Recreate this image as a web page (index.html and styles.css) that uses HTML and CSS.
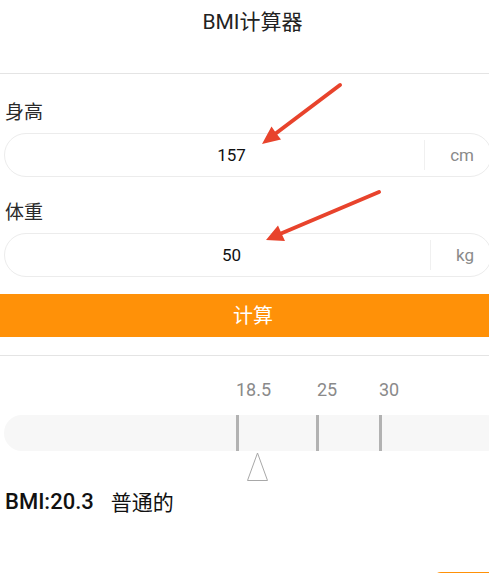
FILE: index.html
```html
<!DOCTYPE html>
<html lang="zh">
<head>
<meta charset="utf-8">
<title>BMI计算器</title>
<link rel="stylesheet" href="styles.css">
</head>
<body>
<div class="page">
  <header class="topbar"><h1 class="title">BMI计算器</h1></header>
  <main class="form">
    <div class="label">身高</div>
    <div class="field">
      <div class="field-value field-value--height">157</div>
      <div class="field-unit">cm</div>
    </div>
    <div class="label label--second">体重</div>
    <div class="field">
      <div class="field-value field-value--weight">50</div>
      <div class="field-unit">kg</div>
    </div>
  </main>
  <button class="calc-btn">计算</button>
  <div class="divider"></div>
  <section class="scale">
    <div class="scale-labels">
      <span class="scale-label" style="left:236px">18.5</span>
      <span class="scale-label" style="left:317px">25</span>
      <span class="scale-label" style="left:379px">30</span>
    </div>
    <div class="scale-bar">
      <span class="tick" style="left:232px"></span>
      <span class="tick" style="left:312px"></span>
      <span class="tick" style="left:375px"></span>
    </div>
    <svg class="marker" style="margin-left:246px" width="23" height="30" viewBox="0 0 23 30">
      <polygon points="11.5,1 21.5,28.5 1.5,28.5" fill="none" stroke="#a8a8a8" stroke-width="1"/>
    </svg>
  </section>
  <div class="result">
    <span class="result-value">BMI:20.3</span><span class="result-text">普通的</span>
  </div>
  <div class="bottom-row"><div class="bottom-btn"></div></div>

  <svg class="annotations" width="489" height="573" viewBox="0 0 489 573">
    <line x1="340" y1="85" x2="275" y2="134" stroke="#e8432c" stroke-width="4" stroke-linecap="round"/>
    <polygon points="262,144 281,139.5 276,133 271.5,126.5" fill="#e8432c"/>
    <line x1="379" y1="192" x2="281" y2="233.5" stroke="#e8432c" stroke-width="4" stroke-linecap="round"/>
    <polygon points="266,240 285,241 281.5,233.5 278,225.5" fill="#e8432c"/>
  </svg>
</div>
</body>
</html>
```

FILE: styles.css
```css
html, body {
  margin: 0;
  padding: 0;
  overflow: hidden;
  background: #ffffff;
}

body {
  font-family: Roboto, "Noto Sans CJK SC", "Noto Sans", sans-serif;
  color: #222;
}

.page {
  position: relative;
  width: 489px;
  height: 573px;
  overflow: hidden;
}

.topbar {
  height: 73px;
  display: flex;
  align-items: flex-start;
  justify-content: center;
  border-bottom: 1px solid #e4e4e4;
}

.title {
  margin: 8px 0 0 16px;
  font-size: 21px;
  font-weight: 400;
  line-height: 28px;
  color: #222;
}

.form {
  display: flex;
  flex-direction: column;
}

.label {
  margin: 27px 0 0 5px;
  font-size: 19px;
  line-height: 24px;
  color: #2a2a2a;
}

.label--second {
  margin-top: 24px;
}

.field {
  display: flex;
  box-sizing: border-box;
  height: 44px;
  width: 488px;
  margin: 8px 0 0 4px;
  border: 1px solid #ececec;
  border-radius: 22px;
}

.field-value {
  flex: 1;
  display: flex;
  align-items: center;
  justify-content: center;
  font-size: 17px;
  color: #111;
}

.field-value--height {
  padding-left: 34px;
}

.field-value--weight {
  padding-left: 28px;
}

.field-unit {
  display: flex;
  align-items: center;
  padding: 0 17px 0 25px;
  margin: 6px 0;
  border-left: 1px solid #f0f0f0;
  font-size: 17px;
  color: #8a8a8a;
}

.calc-btn {
  display: block;
  width: 100%;
  height: 43px;
  margin: 17px 0 0 0;
  padding: 0 0 2px 17px;
  border: none;
  background: #ff9108;
  color: #ffffff;
  font-family: "Noto Sans CJK SC", sans-serif;
  font-size: 20px;
  line-height: 40px;
}

.divider {
  height: 1px;
  margin-top: 18px;
  background: #e4e4e4;
}

.scale {
  display: flex;
  flex-direction: column;
}

.scale-labels {
  position: relative;
  height: 24px;
  margin-top: 22px;
}

.scale-label {
  position: absolute;
  top: 0;
  font-size: 18px;
  line-height: 24px;
  color: #8a8a8a;
}

.scale-bar {
  position: relative;
  height: 36px;
  width: 500px;
  margin: 13px 0 0 4px;
  border-radius: 18px;
  background: #f7f7f7;
}

.tick {
  position: absolute;
  top: 0;
  bottom: 0;
  width: 3px;
  background: #b2b2b2;
}

.marker {
  display: block;
  margin-top: 1px;
}

.result {
  display: flex;
  align-items: center;
  margin: 4px 0 0 5px;
  height: 30px;
}

.result-value {
  font-size: 22px;
  font-weight: 500;
  color: #111;
}

.result-text {
  margin-left: 17px;
  font-size: 21px;
  color: #111;
}

.bottom-row {
  display: flex;
  justify-content: flex-end;
  margin-top: 56px;
}

.bottom-btn {
  width: 56px;
  height: 36px;
  background: #ff9108;
  border-radius: 8px 0 0 0;
}

.annotations {
  position: absolute;
  top: 0;
  left: 0;
  pointer-events: none;
}
```
